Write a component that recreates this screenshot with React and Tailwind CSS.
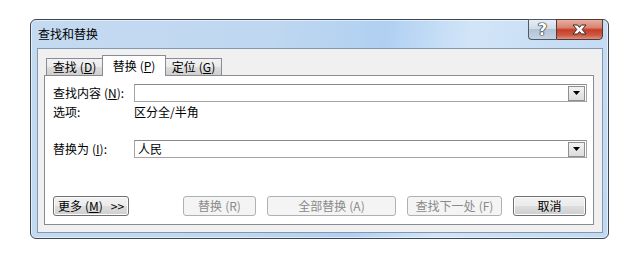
import React from 'react';

// Win7 style "查找和替换" dialog

const Key = ({ k, plain }) => (
  <span className="ml-[3px]">
    (<span className={plain ? '' : 'underline underline-offset-[1px]'}>{k}</span>)
  </span>
);

const DropButton = () => (
  <div className="w-[17px] h-[15px] mr-px border border-[#8e8f8f] bg-[linear-gradient(#f3f3f3,#dcdcdc)] flex items-center justify-center">
    <svg width="7" height="4" viewBox="0 0 7 4">
      <path d="M0 0h7L3.5 4z" fill="#000" />
    </svg>
  </div>
);

const ComboInput = ({ value }) => (
  <div className="flex-1 h-[18px] border border-[#a5a5a5] border-t-[#8b8b8b] bg-white flex items-center justify-between">
    <span className="pl-[3px] leading-none">{value}</span>
    <DropButton />
  </div>
);

const Button = ({ children, width, disabled }) => (
  <div
    className={
      disabled
        ? 'h-[20px] rounded-[3px] border border-[#adb2b5] bg-[#f4f4f4] text-[#8a8a8a] flex items-center justify-center text-[12px] leading-none'
        : 'h-[20px] rounded-[3px] border border-[#707070] bg-[linear-gradient(#f2f2f2_0%,#ebebeb_50%,#dddddd_51%,#cfcfcf_100%)] shadow-[inset_0_0_0_1px_#fcfcfc] flex items-center justify-center text-[12px] leading-none'
    }
    style={{ width }}
  >
    {children}
  </div>
);

const Tab = ({ label, k, active }) =>
  active ? (
    <div className="relative z-10 -ml-px -mb-px w-[64px] h-[21px] border border-b-0 border-[#898c95] bg-white flex items-center justify-center leading-none">
      {label}
      <Key k={k} />
    </div>
  ) : (
    <div className="-ml-px first:ml-0 w-[57px] h-[17px] border border-b-0 border-[#898c95] bg-[linear-gradient(#f2f2f2_0%,#ebebeb_50%,#dddddd_51%,#cfcfcf_100%)] flex items-center justify-center leading-none">
      {label}
      <Key k={k} />
    </div>
  );

export default function App() {
  return (
    <div className="w-[644px] h-[255px] bg-white pl-[30px] pt-[19px] font-['Noto_Sans_CJK_SC','Noto_Sans',sans-serif] text-[12px] text-black">
      <div className="w-[579px] h-[220px] rounded-[6px] border border-[#3e4650] bg-[linear-gradient(100deg,#c4daf1_0%,#bfd7f0_40%,#b0d0f2_58%,#d2e5f8_72%,#c8def5_85%,#c0d9f2_100%)] shadow-[inset_0_0_0_1px_rgba(255,255,255,0.55)] flex flex-col">
        {/* title bar */}
        <div className="h-[28px] flex items-start justify-between">
          <div className="pl-[7px] pt-[8px] leading-none text-[12px]">查找和替换</div>
          <div className="flex -mt-px mr-[5px]">
            <div className="w-[28px] h-[21px] rounded-bl-[4px] border border-r-0 border-[#4f5966] bg-[linear-gradient(#e6edf5_0%,#d2dce8_45%,#b3c3d6_50%,#c4d3e3_100%)] flex items-center justify-center">
              <span className="text-[16px] font-bold text-white leading-none font-['DejaVu_Sans',sans-serif] [text-shadow:0_0_1px_#222,0_0_1px_#222,0_0_1px_#222,0_0_1px_#222]">?</span>
            </div>
            <div className="w-[47px] h-[21px] rounded-br-[4px] border border-[#4f3a36] bg-[linear-gradient(#e8b0a3_0%,#d9826f_40%,#c43d27_52%,#cc5a44_80%,#e09080_100%)] flex items-center justify-center">
              <svg width="15" height="11" viewBox="0 0 15 11">
                <path
                  d="M1 1h4.5l2 2.4 2-2.4H14l-3.8 4.5L14 10H9.5l-2-2.4-2 2.4H1l3.8-4.5z"
                  fill="#fff"
                  stroke="#3a2622"
                  strokeWidth="1"
                  strokeLinejoin="round"
                />
              </svg>
            </div>
          </div>
        </div>

        {/* client area */}
        <div className="ml-[6px] mr-[5px] mb-[5px] h-[185px] border border-[#8498b0] bg-[#f0f0f0] pt-[6px] pl-[6px] flex flex-col">
          <div className="flex items-end h-[20px] pl-[2px]">
            <Tab label="查找" k="D" />
            <Tab label="替换" k="P" active />
            <Tab label="定位" k="G" />
          </div>

          <div className="w-[550px] h-[150px] border border-[#898c95] bg-white pt-[8px] pl-[8px] pr-[6px] flex flex-col">
            <div className="flex items-center h-[18px]">
              <div className="w-[81px] leading-none">
                查找内容<Key k="N" />:
              </div>
              <ComboInput value="" />
            </div>

            <div className="mt-[3px] h-[14px] flex items-center">
              <div className="w-[81px] leading-none">选项:</div>
              <div className="leading-none">区分全/半角</div>
            </div>

            <div className="mt-[21px] flex items-center h-[18px]">
              <div className="w-[81px] leading-none">
                替换为<Key k="I" />:
              </div>
              <ComboInput value="人民" />
            </div>

            <div className="mt-[38px] flex items-center gap-[11px]">
              <Button width="76px">
                更多<Key k="M" />
                <span className="ml-[8px]">&gt;&gt;</span>
              </Button>
              <div className="ml-[43px]">
                <Button width="73px" disabled>
                  替换<Key k="R" plain />
                </Button>
              </div>
              <Button width="129px" disabled>
                全部替换<Key k="A" plain />
              </Button>
              <Button width="95px" disabled>
                查找下一处<Key k="F" plain />
              </Button>
              <Button width="73px">取消</Button>
            </div>
          </div>
        </div>
      </div>
    </div>
  );
}
